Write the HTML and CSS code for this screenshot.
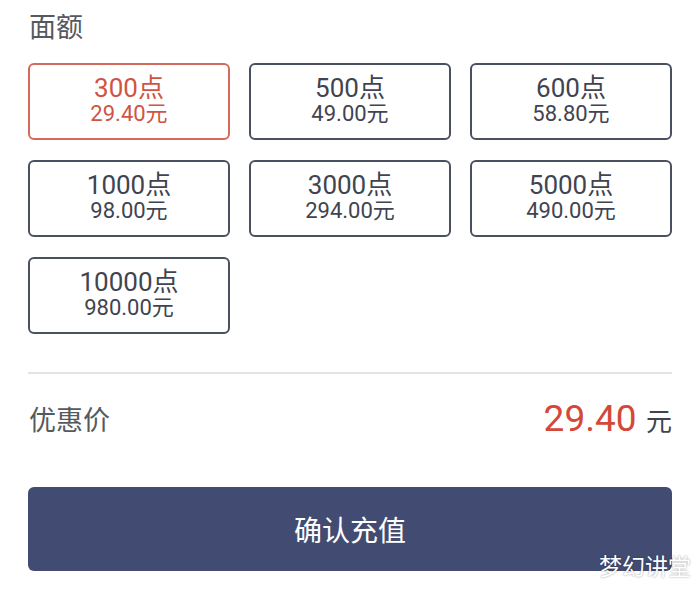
FILE: index.html
```html
<!DOCTYPE html>
<html lang="zh-CN">
<head>
    <meta charset="UTF-8">
    <meta name="viewport" content="width=device-width, initial-scale=1.0">
    <title>充值</title>
    <link rel="stylesheet" href="styles.css">
</head>
<body>
    <h2 class="title">面额</h2>
    <div class="options">
        <button class="option selected">
            <span class="points">300点</span>
            <span class="money">29.40元</span>
        </button>
        <button class="option">
            <span class="points">500点</span>
            <span class="money">49.00元</span>
        </button>
        <button class="option">
            <span class="points">600点</span>
            <span class="money">58.80元</span>
        </button>
        <button class="option">
            <span class="points">1000点</span>
            <span class="money">98.00元</span>
        </button>
        <button class="option">
            <span class="points">3000点</span>
            <span class="money">294.00元</span>
        </button>
        <button class="option">
            <span class="points">5000点</span>
            <span class="money">490.00元</span>
        </button>
        <button class="option">
            <span class="points">10000点</span>
            <span class="money">980.00元</span>
        </button>
    </div>

    <hr class="divider">

    <div class="price-row">
        <span class="label">优惠价</span>
        <span class="price"><span class="amount">29.40</span> 元</span>
    </div>

    <button class="confirm">确认充值</button>

    <div class="watermark">梦幻讲堂</div>
</body>
</html>
```

FILE: styles.css
```css
body {
    margin: 0;
    padding: 0 28px;
    background-color: #ffffff;
    font-family: Roboto, "Noto Sans CJK SC", sans-serif;
    color: #444a56;
    position: relative;
    height: 595px;
    overflow: hidden;
}
.title {
    margin: 12px 0 19px 1px;
    font-size: 27px;
    line-height: 32px;
    font-weight: normal;
    color: #555a60;
}
.options {
    display: grid;
    grid-template-columns: repeat(3, 1fr);
    column-gap: 19px;
    row-gap: 20px;
}
.option {
    box-sizing: border-box;
    height: 77px;
    border: 2px solid #4b5060;
    border-radius: 6px;
    background: #ffffff;
    display: flex;
    flex-direction: column;
    align-items: center;
    justify-content: center;
    font-family: inherit;
    color: #3f4450;
    padding: 0 0 3px;
    cursor: pointer;
}
.points {
    font-size: 26px;
    line-height: 26px;
}
.money {
    font-size: 22px;
    line-height: 25px;
}
.option.selected {
    border-color: #d46a5c;
    color: #cf5443;
}
.divider {
    margin: 38px 0 0;
    border: none;
    height: 2px;
    background-color: #e4e4e4;
}
.price-row {
    height: 88px;
    display: flex;
    justify-content: space-between;
    align-items: center;
}
.label {
    font-size: 27px;
    color: #555a60;
    margin-left: 1px;
}
.price {
    font-size: 26px;
    color: #3f4450;
}
.amount {
    font-size: 37px;
    color: #d4483a;
    margin-right: 3px;
}
.confirm {
    display: block;
    width: 100%;
    height: 84px;
    margin-top: 25px;
    border: none;
    border-radius: 6px;
    background-color: #424c72;
    color: #ffffff;
    font-family: inherit;
    font-size: 28px;
    cursor: pointer;
}
/* 水印 */
.watermark {
    position: absolute;
    right: 9px;
    bottom: 13px;
    font-size: 23px;
    color: #ffffff;
    text-shadow: 0 0 2px rgba(0, 0, 0, 0.45);
}
```
